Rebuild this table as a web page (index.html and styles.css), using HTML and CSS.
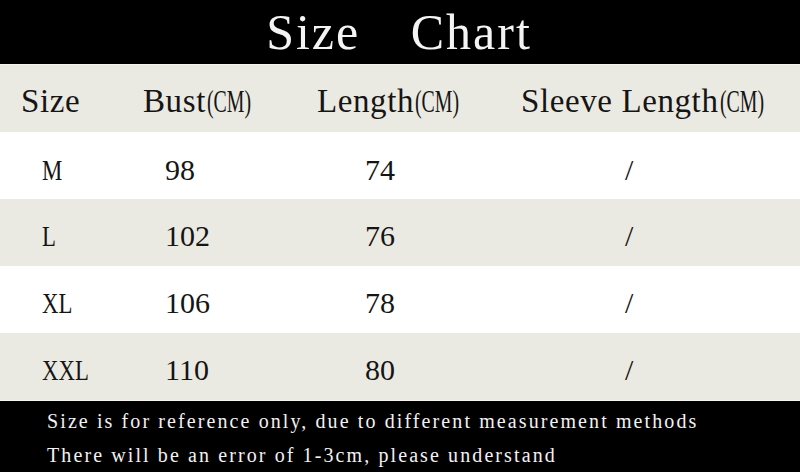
FILE: index.html
```html
<!DOCTYPE html>
<html>
<head>
<meta charset="utf-8">
<link rel="stylesheet" href="styles.css">
</head>
<body>
<div class="chart">
  <div class="title">Size Chart</div>
  <div class="row head">
    <span>Size</span>
    <span>Bust<small>(CM)</small></span>
    <span>Length<small>(CM)</small></span>
    <span>Sleeve Length<small>(CM)</small></span>
  </div>
  <div class="row data light"><span><b class="lt">M</b></span><span>98</span><span>74</span><span>/</span></div>
  <div class="row data beige"><span><b class="lt">L</b></span><span>102</span><span>76</span><span>/</span></div>
  <div class="row data light"><span><b class="lt">XL</b></span><span>106</span><span>78</span><span>/</span></div>
  <div class="row data beige last"><span><b class="lt">XXL</b></span><span>110</span><span>80</span><span>/</span></div>
  <div class="note">
    <p>Size is for reference only, due to different measurement methods</p>
    <p>There will be an error of 1-3cm, please understand</p>
  </div>
</div>
</body>
</html>
```
FILE: styles.css
```css
html, body {
  margin: 0;
  padding: 0;
  background: #000;
}
.chart {
  width: 800px;
  height: 472px;
  display: flex;
  flex-direction: column;
  font-family: "Liberation Serif", "Times New Roman", serif;
  color: #151515;
}
.title {
  height: 64px;
  background: #000;
  color: #f4f4f4;
  font-size: 50px;
  line-height: 64px;
  text-align: center;
  word-spacing: 36px;
  letter-spacing: 2px;
  padding-right: 2px;
  border-bottom: 1px solid #f6f5f0;
  box-sizing: content-box;
}
.row {
  display: grid;
  align-items: center;
  box-sizing: border-box;
}
.head {
  height: 68px;
  background: #ebeae2;
  grid-template-columns: 122px 174px 204px auto;
  padding-left: 21px;
  padding-top: 6px;
  font-size: 33px;
  letter-spacing: 0.6px;
}
.head small {
  display: inline-block;
  font-size: 31px;
  letter-spacing: 0;
  transform: scaleX(0.64);
  transform-origin: left center;
  margin-left: 1px;
}
.data {
  grid-template-columns: 123px 200px 260px auto;
  padding-left: 42px;
  padding-top: 8px;
  font-size: 30px;
}
.data .lt {
  display: inline-block;
  font-weight: normal;
  transform: scaleX(0.76);
  transform-origin: left center;
}
.light { background: #ffffff; height: 68px; }
.beige { background: #ebeae2; height: 67px; }
.beige.last { height: 68px; }
.note {
  flex: 1;
  background: #000;
  color: #f2f2f2;
  border-top: 1px solid #f6f5f0;
  padding: 3px 0 0 47px;
  font-size: 20px;
  letter-spacing: 2.1px;
}
.note p {
  margin: 0;
  line-height: 34px;
}
```
